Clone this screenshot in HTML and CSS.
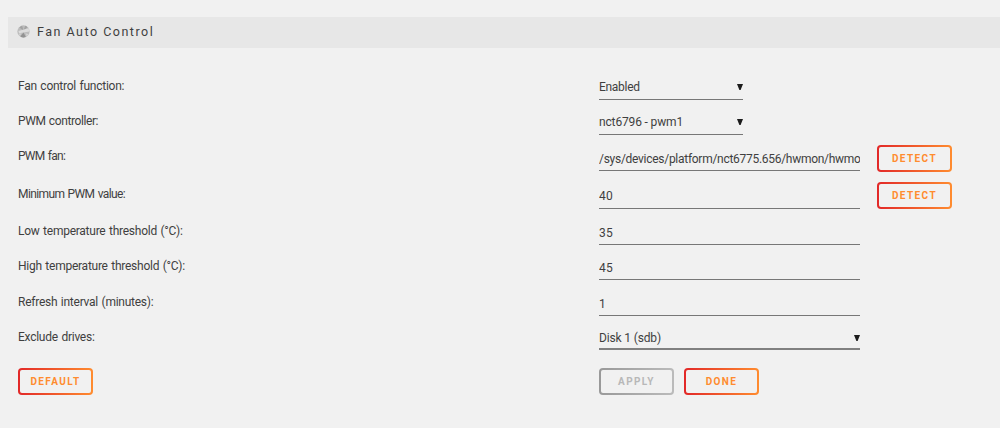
FILE: index.html
```
<!DOCTYPE html>
<html lang="en">
<head>
    <meta charset="UTF-8">
    <meta name="viewport" content="width=device-width, initial-scale=1.0">
    <title>Fan Auto Control</title>
    <link rel="stylesheet" href="styles.css">
</head>
<body>
    <div class="title">
        <svg class="icon" viewBox="0 0 14 14">
            <circle cx="7" cy="7" r="6.6" fill="#bcbcbc"/>
            <path d="M7 6L2.5 2.6A6.5 6.5 0 0 1 5.5.8zM7 6L8.8.9a6.5 6.5 0 0 1 2.6 1.6z" fill="#a2a2a2"/>
            <path d="M1.5 6.5l11-3 .8 3.5-11 2z" fill="#dcdcdc"/>
            <path d="M7 8l-3.5 4.4a6.5 6.5 0 0 0 6 .6z" fill="#929292"/>
            <path d="M9 9l3.5 1-2 2zM2 9.5L5 9l-2 2.5z" fill="#d4d4d4"/>
        </svg>
        <span>Fan Auto Control</span>
    </div>

    <form id="fanForm" class="settings">
        <div class="row">
            <label for="service">Fan control function:</label>
            <div class="field narrow">
                <select id="service" name="service" class="service">
                    <option>Enabled</option>
                    <option>Disabled</option>
                </select>
                <svg class="arrow" viewBox="0 0 6 6"><path d="M0 0h6L3.6 6H2.4z"/></svg>
            </div>
        </div>
        <div class="row row-controller">
            <label for="controller">PWM controller:</label>
            <div class="field narrow">
                <select id="controller" name="controller">
                    <option>nct6796 - pwm1</option>
                </select>
                <svg class="arrow" viewBox="0 0 6 6"><path d="M0 0h6L3.6 6H2.4z"/></svg>
            </div>
        </div>
        <div class="row row-fan">
            <label for="fan">PWM fan:</label>
            <div class="field">
                <input type="text" id="fan" name="fan" class="path" value="/sys/devices/platform/nct6775.656/hwmon/hwmon2/fan1_input">
            </div>
            <button type="button">Detect</button>
        </div>
        <div class="row row-pwm">
            <label for="pwm">Minimum PWM value:</label>
            <div class="field">
                <input type="text" id="pwm" name="pwm" class="number" value="40">
            </div>
            <button type="button">Detect</button>
        </div>
        <div class="row">
            <label for="low">Low temperature threshold (°C):</label>
            <div class="field">
                <input type="text" id="low" name="low" class="number" value="35">
            </div>
        </div>
        <div class="row row-high">
            <label for="high">High temperature threshold (°C):</label>
            <div class="field">
                <input type="text" id="high" name="high" class="number" value="45">
            </div>
        </div>
        <div class="row">
            <label for="interval">Refresh interval (minutes):</label>
            <div class="field">
                <input type="text" id="interval" name="interval" class="number" value="1">
            </div>
        </div>
        <div class="row row-drives">
            <label for="exclude">Exclude drives:</label>
            <div class="field">
                <select id="exclude" name="exclude">
                    <option>Disk 1 (sdb)</option>
                </select>
                <svg class="arrow" viewBox="0 0 6 6"><path d="M0 0h6L3.6 6H2.4z"/></svg>
            </div>
        </div>
        <div class="actions">
            <div class="left"><button type="button">Default</button></div>
            <button type="submit" disabled>Apply</button>
            <button type="button">Done</button>
        </div>
    </form>
</body>
</html>
```
FILE: styles.css
```
body {
    margin: 0;
    padding-top: 17px;
    background-color: #f1f1f1;
    color: #3f3f3f;
    font-family: Roboto, "Noto Sans", sans-serif;
    font-size: 12px;
    overflow: hidden;
}
.title {
    display: flex;
    align-items: center;
    box-sizing: border-box;
    height: 31px;
    margin-left: 8px;
    padding: 0 0 2px 9px;
    background-color: #e7e7e7;
    font-size: 12.5px;
    letter-spacing: 1.5px;
}
.icon {
    width: 13px;
    height: 13px;
    margin: 0 7px 0 0;
}
.settings {
    padding: 28px 0 0 18px;
}
.row {
    display: flex;
    align-items: flex-start;
    height: 35px;
}
.row label {
    width: 581px;
    line-height: 21px;
    letter-spacing: -0.25px;
    word-spacing: 0.8px;
}
.field {
    position: relative;
    box-sizing: border-box;
    width: 261px;
    height: 24px;
    border-bottom: 1px solid #777;
}
.narrow {
    width: 144px;
}
.field input, .field select {
    display: block;
    width: 100%;
    height: 20px;
    margin: 1px 0 0;
    padding: 0;
    border: none;
    border-radius: 0;
    outline: none;
    background: transparent;
    color: #3f3f3f;
    font: inherit;
    letter-spacing: -0.15px;
    appearance: none;
}
.field .number {
    height: 21px;
    letter-spacing: 0.3px;
}
.field .service {
    letter-spacing: -0.3px;
}
.field .path {
    height: 21px;
    letter-spacing: -0.28px;
}
.arrow {
    position: absolute;
    top: 8px;
    right: 0;
    width: 6px;
    height: 6px;
    fill: #1c1c1c;
}
.row-controller label {
    letter-spacing: -0.4px;
}
.row-fan {
    height: 37px;
}
.row-fan label {
    letter-spacing: -0.7px;
}
.row-pwm {
    height: 38px;
}
.row-pwm label {
    line-height: 22px;
    letter-spacing: -0.6px;
}
.row-fan .field {
    height: 25px;
}
.row-pwm .field {
    height: 26px;
}
.row-fan input, .row-pwm input {
    margin-top: 2px;
}
.row-high {
    height: 36px;
}
.row-drives {
    height: 41px;
}
.row-drives .field {
    height: 23px;
    border-bottom: 2px solid #808080;
}
button {
    box-sizing: border-box;
    width: 75px;
    height: 27px;
    padding: 0;
    border: 2px solid transparent;
    border-radius: 4px;
    background: linear-gradient(#f1f1f1, #f1f1f1) padding-box, linear-gradient(90deg, #e22828, #ff8c2f) border-box;
    color: #ff8c2f;
    font-family: Roboto, "Noto Sans", sans-serif;
    font-size: 10px;
    font-weight: bold;
    letter-spacing: 1.4px;
    text-transform: uppercase;
}
.row button {
    margin: -1px 0 0 17px;
}
button:disabled {
    background: linear-gradient(#f1f1f1, #f1f1f1) padding-box, linear-gradient(90deg, #999, #bbb) border-box;
    color: #b8b8b8;
}
.actions {
    display: flex;
    gap: 10px;
}
.left {
    width: 571px;
}
```
